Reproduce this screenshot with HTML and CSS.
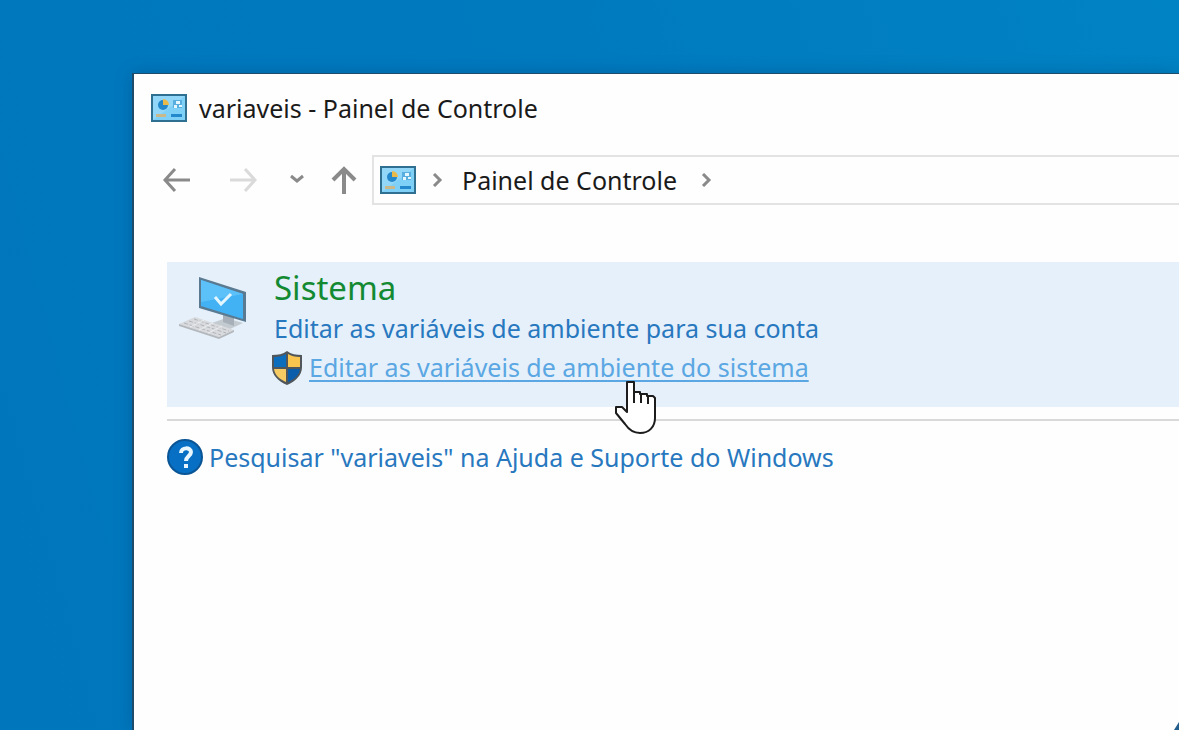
FILE: index.html
```html
<!DOCTYPE html>
<html lang="pt-BR">

<head>
    <meta charset="UTF-8">
    <meta name="viewport" content="width=device-width, initial-scale=1.0">
    <title>variaveis - Painel de Controle</title>
    <link rel="stylesheet" href="styles.css">
</head>

<body>
    <!-- shared icon, used in the title bar and the address bar -->
    <svg class="defs" aria-hidden="true">
        <symbol id="panel-icon" viewBox="0 0 36 28">
            <rect x="1" y="1" width="34" height="26" fill="#7fd0f7" stroke="#2f6f8f" stroke-width="2" />
            <path d="M2 26V2h32z" fill="#a5defa" opacity=".5" />
            <circle cx="12" cy="11" r="5" fill="#2488cc" />
            <path d="M12 11V5a6 6 0 0 1 6 6z" fill="#e9b949" />
            <path d="M22 6h9v8h-9z" fill="#58aede" />
            <path d="M25 7h4v3h-4zM23 11h3v3h-3zM28 11h3v2h-3z" fill="#e6f6ff" />
            <path d="M5 20h10v3H5z" fill="#c9b98a" />
            <path d="M20 20h11v3H20z" fill="#2488cc" />
        </symbol>
    </svg>

    <main class="window">
        <header class="title-bar">
            <svg class="panel-icon" aria-hidden="true"><use href="#panel-icon" /></svg>
            <h1 class="title">variaveis - Painel de Controle</h1>
        </header>

        <div class="toolbar">
            <button class="nav-btn" type="button" aria-label="Voltar">
                <svg width="28" height="26" viewBox="0 0 28 26"><path d="M28 13H3M13 2L3 13l10 11" /></svg>
            </button>
            <button class="nav-btn" type="button" aria-label="Avançar" disabled>
                <svg width="28" height="26" viewBox="0 0 28 26"><path d="M0 13h25M15 2l10 11-10 11" /></svg>
            </button>
            <button class="nav-btn nav-btn-recent" type="button" aria-label="Locais recentes">
                <svg width="14" height="14" viewBox="0 0 14 14"><path d="M1 3l6 5 6-5" /></svg>
            </button>
            <button class="nav-btn nav-btn-up" type="button" aria-label="Acima">
                <svg width="26" height="28" viewBox="0 0 26 28"><path d="M13 28V3M2 14L13 3l11 11" /></svg>
            </button>
            <nav class="address">
                <svg class="panel-icon" aria-hidden="true"><use href="#panel-icon" /></svg>
                <svg class="chevron" viewBox="0 0 12 14" aria-hidden="true"><path d="M2 1l6 6-6 6" /></svg>
                <a class="crumb" href="#">Painel de Controle</a>
                <svg class="chevron" viewBox="0 0 12 14" aria-hidden="true"><path d="M2 1l6 6-6 6" /></svg>
            </nav>
        </div>

        <div class="content">
            <section class="result">
                <svg class="computer" viewBox="0 0 70 64" aria-hidden="true">
                    <path d="M34 48l14-5 17 5-13 6z" fill="#c3cbd1" />
                    <path d="M45 39l11 4v8l-11-4z" fill="#a7b0b8" />
                    <path d="M21 2l47 15v30L21 33z" fill="#5a7a92" />
                    <path d="M23 5l42 14v25L23 31z" fill="#42b2f4" />
                    <path d="M23 5l42 14L23 27z" fill="#5cc0f9" />
                    <path d="M37 22l6 7 10-10" fill="none" stroke="#e4f6ff" stroke-width="3" />
                    <path d="M1 49l16-7 39 13-15 7z" fill="#d8dadd" />
                    <path d="M1 49l40 13 15-7v2l-15 7L1 51z" fill="#b4b8bc" />
                    <path d="M6 48l37 12M11 46l37 12M16 44l35 12" fill="none" stroke="#b0b4b9" stroke-width="1" stroke-dasharray="4 2" />
                    <path d="M12 52l14-7M21 55l14-7M30 58l14-7" fill="none" stroke="#eceff1" stroke-width="1" />
                </svg>
                <div class="result-body">
                    <h2 class="result-title"><a href="#">Sistema</a></h2>
                    <ul class="tasks">
                        <li><a class="link" href="#">Editar as variáveis de ambiente para sua conta</a></li>
                        <li class="task-admin">
                            <svg class="shield" viewBox="0 0 32 36" aria-hidden="true">
                                <path d="M16 1c4 3 9 4 15 4v12c0 8-6 14-15 18C7 31 1 25 1 17V5c6 0 11-1 15-4z" fill="#50565a" />
                                <path d="M15 4v13H3V7c5 0 9-1 12-3z" fill="#0c6dbd" />
                                <path d="M17 4c3 2 7 3 12 3v10H17z" fill="#fac54f" />
                                <path d="M3 19h12v13C8 29 4 25 3 19z" fill="#f7cb63" />
                                <path d="M17 19h12c-1 6-5 10-12 13z" fill="#0a5dab" />
                            </svg>
                            <a class="link link-hover" href="#">Editar as variáveis de ambiente do sistema</a>
                        </li>
                    </ul>
                </div>
            </section>

            <div class="help">
                <svg class="help-icon" viewBox="0 0 36 36" aria-hidden="true">
                    <circle cx="18" cy="18" r="17" fill="#0870c4" stroke="#0a5596" stroke-width="2" />
                    <path d="M14 14c0-6 10-6 10-1 0 4-5 4-5 9" fill="none" stroke="#e8f7ff" stroke-width="4" />
                    <path d="M17 25h4v4h-4z" fill="#e8f7ff" />
                </svg>
                <a class="link" href="#">Pesquisar "variaveis" na Ajuda e Suporte do Windows</a>
            </div>
        </div>
    </main>

    <svg class="cursor" viewBox="0 0 44 56" aria-hidden="true">
        <path d="M13 33V3h7v10h6v2h7v2h6l2 2v20c0 9-6 15-15 15-7 0-11-3-15-9L2 34v-6h6z" fill="#fff" stroke="#1c1c1c" stroke-width="2" stroke-linejoin="round" />
        <path d="M20 12v12M27 14v10M34 16v9" fill="none" stroke="#1c1c1c" stroke-width="2" />
    </svg>
    <svg class="corner" viewBox="0 0 5 8" aria-hidden="true"><path d="M5 0v8H0z" fill="#235d8c" /></svg>
</body>

</html>
```
FILE: styles.css
```css
* {
    box-sizing: border-box;
}

body {
    position: relative;
    display: flex;
    min-height: 100vh;
    margin: 0;
    padding: 73px 0 0 132px;
    overflow: hidden;
    background: linear-gradient(75deg, #0077bd 0%, #007abf 55%, #0083c4 100%);
    color: #1a1a1a;
    font-family: "Noto Sans", "Open Sans", sans-serif;
    font-size: 25px;
    line-height: 32px;
}

a {
    color: inherit;
    text-decoration: none;
}

.defs {
    position: absolute;
    width: 0;
    height: 0;
}

.window {
    flex: 1;
    min-width: 0;
    border-top: 1px solid #1f4c6b;
    border-left: 2px solid #1f4c6b;
    background-color: #fefefe;
    box-shadow: 0 0 16px rgba(0, 40, 80, .25);
    white-space: nowrap;
}

.panel-icon {
    flex: none;
    width: 36px;
    height: 28px;
}

.title-bar {
    display: flex;
    align-items: center;
    gap: 12px;
    height: 67px;
    padding-left: 17px;
}

.title {
    margin: 0;
    font-size: inherit;
    font-weight: normal;
}

.toolbar {
    display: flex;
    align-items: center;
    height: 78px;
    padding-left: 8px;
}

.nav-btn {
    display: flex;
    flex: none;
    align-items: center;
    justify-content: center;
    width: 68px;
    height: 48px;
    padding: 0;
    border: none;
    background: none;
}

.nav-btn path,
.chevron path {
    fill: none;
    stroke: #8a8a8a;
    stroke-width: 3;
}

.nav-btn:disabled path {
    stroke: #dadada;
}

.nav-btn-recent {
    width: 38px;
}

.nav-btn-up {
    width: 56px;
}

.nav-btn-up path {
    stroke-width: 4;
}

.address {
    display: flex;
    flex: 1;
    align-items: center;
    height: 50px;
    padding-left: 6px;
    border: 2px solid #e3e3e3;
    border-right: none;
}

.chevron {
    flex: none;
    width: 12px;
    height: 14px;
    margin: 0 18px 0 16px;
}

.crumb + .chevron {
    margin-left: 24px;
}

.content {
    padding: 43px 0 0 33px;
}

.result {
    display: flex;
    gap: 26px;
    padding: 5px 0 20px 11px;
    background-color: #e5f0fa;
}

.computer {
    flex: none;
    width: 70px;
    height: 64px;
    margin-top: 8px;
}

.result-title {
    margin: 0;
    color: #138a32;
    font-size: 33px;
    font-weight: normal;
    line-height: 42px;
}

.tasks {
    margin: 0;
    padding: 0;
    list-style: none;
    line-height: 39px;
}

.task-admin {
    display: flex;
    align-items: center;
    gap: 6px;
    margin-left: -3px;
}

.shield {
    flex: none;
    width: 32px;
    height: 36px;
}

.link {
    color: #2878bf;
}

.link-hover {
    color: #5aa7e3;
    text-decoration: underline;
    text-decoration-thickness: 2px;
    text-underline-offset: 3px;
}

.help {
    display: flex;
    align-items: center;
    gap: 6px;
    margin-top: 12px;
    padding-top: 18px;
    border-top: 2px solid #d9d9d9;
}

.help-icon {
    flex: none;
    width: 36px;
    height: 36px;
}

.cursor {
    position: absolute;
    top: 379px;
    left: 614px;
    width: 44px;
    height: 56px;
}

.corner {
    position: absolute;
    right: 0;
    bottom: 0;
    width: 5px;
    height: 8px;
}
```
